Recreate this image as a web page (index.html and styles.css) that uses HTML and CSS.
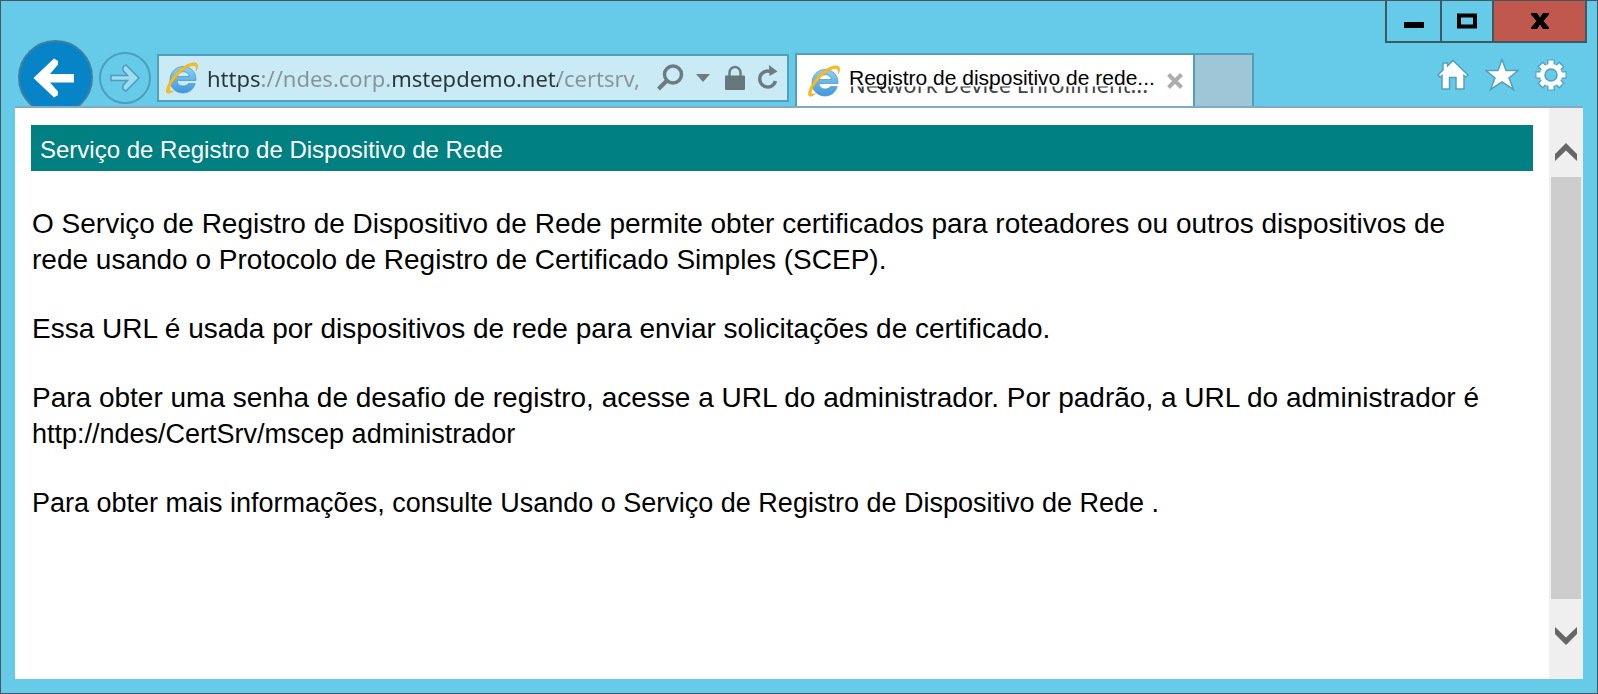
FILE: index.html
```html
<!DOCTYPE html>
<html lang="pt-BR">
<head>
<meta charset="utf-8">
<title>Registro de dispositivo de rede</title>
<link rel="stylesheet" href="styles.css">
</head>
<body>
<svg class="defs" aria-hidden="true">
  <defs>
    <linearGradient id="blue" x1="0" y1="0" x2="0" y2="1"><stop offset="0" stop-color="#8fd0f2"/><stop offset="1" stop-color="#3f97d8"/></linearGradient>
    <symbol id="ie" viewBox="0 0 34 34">
      <path d="M31 19.500H12c.5 3.700 2.800 5.500 6 5.500 2.500 0 4.200-.9 5.500-2.400h6.800C28.400 28.500 24 32 18 32 10.500 32 5 26.500 5 19S10.500 5.500 18 5.500 31.500 11 31 19.500zM12.200 15.500h12c-.5-3-2.700-4.800-6-4.800s-5.500 1.800-6 4.800z" fill="url(#blue)" stroke="#4a93c8" stroke-width=".7"/>
      <path d="M8.500 29.500C5.500 32.500 2.500 33 1.700 31.500.3 28.500 4 19.500 11.500 11.500 18.500 4.500 27 .5 31 2.200c2.500 1.300 2 4.600.3 7.600.2-2.500.2-4-1.300-4.900-3-1.500-10 2-16.300 8.500C7 20.500 3.500 27 4.800 29.500c.6 1 2 .8 3.700 0z" fill="#f7bd1d" stroke="#e8a41a" stroke-width=".5"/>
    </symbol>
  </defs>
</svg>
<div class="window">
  <header class="chrome">
    <nav class="nav" aria-label="Navegação">
      <button class="back" aria-label="Voltar"><svg viewBox="0 0 42 40"><path d="M41 16v8.500H17L25 33.500V37l-4 2.500L.5 20 21 .5 25 3v3.500L17 16z" fill="#fff"/></svg></button>
      <button class="forward" aria-label="Avançar"><svg viewBox="0 0 30 28"><path d="M1 11.500h16.500L13 6.500V3l3-2L29 14 16 27l-3-2v-3.500l4.500-5H1z" fill="#9fdcf1" stroke="#4f9cb8" stroke-width="1.500"/></svg></button>
      <form class="address">
        <svg class="ie"><use href="#ie"/></svg>
        <input type="text" aria-label="Endereço" value="https://ndes.corp.mstepdemo.net/certsrv,">
        <button type="button" class="search" aria-label="Pesquisar"><svg viewBox="0 0 27 27"><circle cx="16" cy="10.500" r="8.500" fill="none" stroke="#6c7d82" stroke-width="3.500"/><path d="M10 16.500 1.500 25" stroke="#6c7d82" stroke-width="4"/></svg></button>
        <button type="button" class="drop" aria-label="Mostrar lista"><svg viewBox="0 0 14 8"><path d="M0 0h14L7 8z" fill="#6c7d82"/></svg></button>
        <button type="button" class="lock" aria-label="Relatório de segurança"><svg viewBox="0 0 20 25"><path d="M4.500 12V7.500a5.500 5.500 0 0 1 11 0V12" fill="none" stroke="#6c7d82" stroke-width="2.500"/><rect y="10.500" width="20" height="14.500" rx="1" fill="#66777b"/></svg></button>
        <button type="button" class="reload" aria-label="Atualizar"><svg viewBox="0 0 21 25"><path d="M13.500 6.500A8 8 0 1 0 18.500 16" fill="none" stroke="#6c7d82" stroke-width="3.500"/><path d="M12 0l8.500 6.500-8 4.500z" fill="#6c7d82"/></svg></button>
      </form>
    </nav>
    <div class="tabs">
      <div class="tab">
        <svg class="ie"><use href="#ie"/></svg>
        <span class="tab-title"><span class="tab-under">Network Device Enrollment...</span><span class="tab-text">Registro de dispositivo de rede...</span></span>
        <button class="tab-close" aria-label="Fechar guia"><svg viewBox="0 0 16 16"><path d="M1.500 1.500l13 13m0-13l-13 13" stroke="#adadad" stroke-width="4"/></svg></button>
      </div>
      <button class="new-tab" aria-label="Nova guia"></button>
    </div>
    <div class="right">
      <div class="controls">
        <button class="min" aria-label="Minimizar"><svg viewBox="0 0 20 16"><path d="M0 9h20v6H0z"/></svg></button>
        <button class="max" aria-label="Maximizar"><svg viewBox="0 0 20 16"><path d="M2 2.500h16v11H2z" fill="none" stroke="#000" stroke-width="4"/></svg></button>
        <button class="close" aria-label="Fechar"><svg viewBox="0 0 18 16"><path d="M0 0h6l3 4.500L12 0h6v1.500L12.500 8l5.500 6.500V16h-6l-3-4.500L6 16H0v-1.500L5.500 8 0 1.500z"/></svg></button>
      </div>
      <div class="tools">
        <button aria-label="Página inicial"><svg viewBox="0 0 34 34"><path d="M17 2.500 32 17l-2 2-2-1.500V31h-8V19.500h-6.500V31h-7.500V17.500L4 19l-2-2 5-5V5h4.500v3z" fill="#fff" stroke="#55a0ba" stroke-width="1.500"/></svg></button>
        <button aria-label="Favoritos"><svg viewBox="0 0 34 34"><path d="M17 1.500l4 11h12l-9 7.500 4.500 11.500L17 24 5.500 31.500 10 20 1 12.500h12z" fill="#fff" stroke="#55a0ba" stroke-width="1.500"/></svg></button>
        <button aria-label="Ferramentas"><svg viewBox="0 0 34 34"><g stroke="#55a0ba" stroke-width="7.500"><path d="M17 1.500v31M1.500 17h31M6 6l22 22M28 6 6 28"/></g><g stroke="#fff" stroke-width="5"><path d="M17 2.500v29M2.500 17h29M7 7l20 20M27 7 7 27"/></g><circle cx="17" cy="17" r="8.500" fill="#66cae9" stroke="#fff" stroke-width="5"/><circle cx="17" cy="17" r="6" fill="#66cae9" stroke="#55a0ba" stroke-width="1.500"/></svg></button>
      </div>
    </div>
  </header>
  <div class="viewport">
    <main class="page">
      <h1>Serviço de Registro de Dispositivo de Rede</h1>
      <p>O Serviço de Registro de Dispositivo de Rede permite obter certificados para roteadores ou outros dispositivos de<br>rede usando o Protocolo de Registro de Certificado Simples (SCEP).</p>
      <p>Essa URL é usada por dispositivos de rede para enviar solicitações de certificado.</p>
      <p>Para obter uma senha de desafio de registro, acesse a URL do administrador. Por padrão, a URL do administrador é<br><span class="compact">http://ndes/CertSrv/mscep administrador</span></p>
      <p class="compact">Para obter mais informações, consulte Usando o Serviço de Registro de Dispositivo de Rede .</p>
    </main>
    <div class="scrollbar">
      <button class="up" aria-label="Rolar para cima"><svg viewBox="0 0 22 18"><path d="M0 11 11 0l11 11v7L11 7.500 0 18z" fill="#666"/></svg></button>
      <div class="thumb"></div>
      <button class="down" aria-label="Rolar para baixo"><svg viewBox="0 0 22 18"><path d="M0 7l11 11L22 7V0L11 10.500 0 0z" fill="#666"/></svg></button>
    </div>
  </div>
</div>
</body>
</html>
```
FILE: styles.css
```css
* { box-sizing: border-box; }
body {
  margin: 0;
  font-family: "Liberation Sans", Arial, sans-serif;
  color: #000;
}
button {
  padding: 0;
  border: 0;
  background: none;
  display: flex;
  align-items: center;
  justify-content: center;
  flex: none;
}
svg { display: block; flex: none; }
.defs { position: absolute; width: 0; height: 0; }

.window {
  min-height: 100vh;
  display: flex;
  flex-direction: column;
  padding: 0 14px 14px;
  border: 1px solid #45565e;
  background: #66cae9;
}

/* browser bar */
.chrome {
  display: flex;
  height: 107px;
  overflow-x: visible;
  overflow-y: clip;
  border-bottom: 2px solid #84a9c6;
}
.nav {
  display: flex;
  flex: 0 1 774px;
  align-items: center;
  height: 75px;
  margin-top: 39px;
  padding-left: 3px;
  min-width: 0;
}
.back {
  width: 75px;
  height: 75px;
  border-radius: 50%;
  background: #0784c8;
  border: 2px solid #3f7fa0;
}
.back svg { width: 42px; height: 40px; margin-right: 3px; }
.forward {
  width: 52px;
  height: 52px;
  margin: 0 6px;
  border-radius: 50%;
  border: 2px solid #4f9fbb;
}
.forward svg { width: 30px; height: 28px; }
.address {
  display: flex;
  flex: 1;
  align-items: center;
  min-width: 0;
  height: 48px;
  padding: 0 9px 0 6px;
  border: 2px solid #529fba;
  background: #caebf6;
}
.ie { width: 34px; height: 34px; }
.address input {
  flex: 1;
  min-width: 0;
  height: 40px;
  margin-left: 8px;
  padding: 0;
  border: 0;
  outline: 0;
  font: 22px "Noto Sans", "Open Sans", sans-serif;
  color: transparent;
  background: linear-gradient(90deg, #2a3538 0 54px, #849499 54px 184px, #2a3538 184px 351px, #849499 351px);
  -webkit-background-clip: text;
  background-clip: text;
}
.search { margin-left: 8px; }
.search svg { width: 27px; height: 27px; }
.drop { margin-left: 12px; }
.drop svg { width: 14px; height: 8px; }
.lock { margin-left: 15px; }
.lock svg { width: 20px; height: 25px; }
.reload { margin-left: 12px; }
.reload svg { width: 21px; height: 25px; }

.tabs {
  display: flex;
  flex: none;
  margin: 52px 0 0 6px;
  border: 2px solid #529fba;
  border-bottom: 0;
}
.tab {
  display: flex;
  align-items: center;
  width: 396px;
  padding: 0 10px;
  background: #fff;
}
.tab-title {
  position: relative;
  flex: 1;
  margin-left: 8px;
  white-space: nowrap;
  font-size: 21px;
  line-height: 28px;
}
.tab-text { position: relative; display: block; padding-bottom: 6px; }
.tab-under {
  position: absolute;
  left: 0;
  top: 6px;
  font: 22px/28px "Noto Sans", "Open Sans", sans-serif;
  color: #444;
  clip-path: inset(17px 0 0 0);
}
.tab-close svg { width: 16px; height: 16px; }
.new-tab {
  width: 59px;
  border-left: 2px solid #529fba;
  background: #9fc6d6;
}

.right {
  flex: 1;
  display: flex;
  flex-direction: column;
  align-items: flex-end;
}
.controls {
  display: flex;
  height: 42px;
  margin-right: -4px;
  border: 2px solid #3d5964;
  border-top: 0;
}
.controls svg { width: 20px; height: 16px; }
.min { width: 55px; border-right: 2px solid #3d5964; }
.max { width: 52px; border-right: 2px solid #3d5964; }
.close { width: 91px; background: #c1584e; }
.tools {
  display: flex;
  gap: 15px;
  margin: 15px 15px 0 0;
}
.tools svg { width: 34px; height: 34px; }

/* page */
.viewport {
  flex: 1;
  display: flex;
  background: #fff;
}
.page {
  flex: 1;
  padding: 17px 16px;
}
h1 {
  margin: 0 0 35px;
  padding: 3px 9px 0;
  font-size: 24px;
  font-weight: 400;
  line-height: 43px;
  color: #fff;
  background: #008080;
}
p {
  margin: 0 1px 33px;
  font-size: 28px;
  line-height: 36px;
}
.compact { font-size: 27px; }
.scrollbar {
  display: flex;
  flex-direction: column;
  width: 34px;
  padding: 0 2px;
  background: #efefef;
}
.scrollbar svg { width: 22px; height: 18px; }
.up { height: 69px; padding-top: 18px; }
.thumb { flex: 1; background: #cdcdcd; }
.down { height: 80px; padding-bottom: 6px; }
```
